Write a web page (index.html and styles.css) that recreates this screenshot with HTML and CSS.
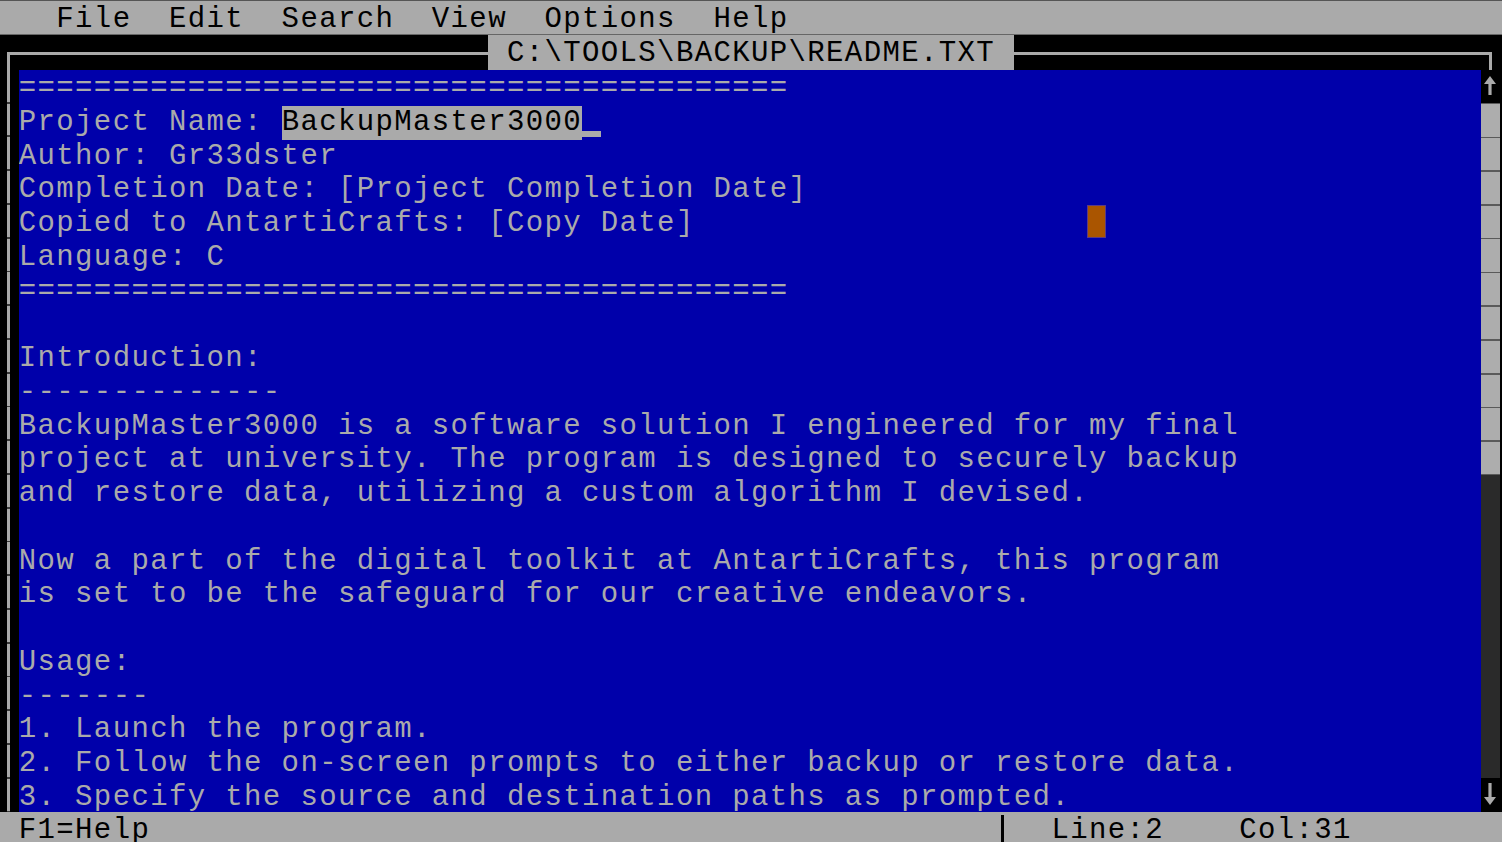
FILE: index.html
```html
<!DOCTYPE html>
<html lang="en">
<head>
<meta charset="utf-8">
<title>EDIT - README.TXT</title>
<link rel="stylesheet" href="styles.css">
</head>
<body>
<div class="screen">
  <div class="menubar"><span class="txt">   File  Edit  Search  View  Options  Help</span></div>

  <div class="titlebar">
    <div class="tseg-left"><div class="corner-l"></div></div>
    <div class="title"><span class="txt"> C:\TOOLS\BACKUP\README.TXT </span></div>
    <div class="tseg-right"><div class="corner-r"></div></div>
  </div>

  <div class="body">
    <div class="gutter"><div class="vline"></div></div>
    <div class="editor">
      <div class="line">=========================================</div>
      <div class="line">Project Name: <span class="sel">BackupMaster3000</span><span class="cur"> </span></div>
      <div class="line">Author: Gr33dster</div>
      <div class="line">Completion Date: [Project Completion Date]</div>
      <div class="line">Copied to AntartiCrafts: [Copy Date]                     <span class="mouse"> </span></div>
      <div class="line">Language: C</div>
      <div class="line">=========================================</div>
      <div class="line"> </div>
      <div class="line">Introduction:</div>
      <div class="line">--------------</div>
      <div class="line">BackupMaster3000 is a software solution I engineered for my final</div>
      <div class="line">project at university. The program is designed to securely backup</div>
      <div class="line">and restore data, utilizing a custom algorithm I devised.</div>
      <div class="line"> </div>
      <div class="line">Now a part of the digital toolkit at AntartiCrafts, this program</div>
      <div class="line">is set to be the safeguard for our creative endeavors.</div>
      <div class="line"> </div>
      <div class="line">Usage:</div>
      <div class="line">-------</div>
      <div class="line">1. Launch the program.</div>
      <div class="line">2. Follow the on-screen prompts to either backup or restore data.</div>
      <div class="line">3. Specify the source and destination paths as prompted.</div>
    </div>
    <div class="scroll">
      <div class="sb-btn">
        <svg viewBox="0 0 19 34" width="19" height="34"><path d="M9 7 L15 15 L10.6 15 L10.6 26 L7.4 26 L7.4 15 L3 15 Z" fill="#aaaaaa"/></svg>
      </div>
      <div class="sb-track"></div>
      <div class="sb-dark"></div>
      <div class="sb-btn">
        <svg viewBox="0 0 19 34" width="19" height="34"><path d="M9 27 L15 19 L10.6 19 L10.6 5 L7.4 5 L7.4 19 L3 19 Z" fill="#aaaaaa"/></svg>
      </div>
    </div>
  </div>

  <div class="status"><span class="txt">F1=Help                                             <span class="vbar"> </span>  Line:2    Col:31</span></div>
</div>
</body>
</html>
```

FILE: styles.css
```css
:root {
  --cw: 18.775px;
  --rh: 33.75px;
  --gray: #aaaaaa;
  --blue: #0000aa;
}

* { box-sizing: border-box; }

html, body {
  margin: 0;
  padding: 0;
  background: #000;
  overflow: hidden;
}

.screen {
  width: 1502px;
  height: 842px;
  display: flex;
  flex-direction: column;
  font-family: "Liberation Mono", "DejaVu Sans Mono", monospace;
  font-size: 29px;
  letter-spacing: calc(var(--cw) - 29px * 0.60009765625);
  overflow: hidden;
}

.txt { white-space: pre; }

.menubar {
  height: 35px;
  flex: 0 0 35px;
  background: var(--gray);
  color: #000;
  border-top: 1px solid #555;
  border-bottom: 1px solid #666;
  padding-top: 4px;
  line-height: 29px;
  white-space: nowrap;
}

.titlebar {
  height: 34.5px;
  flex: 0 0 34.5px;
  background: #000;
  display: flex;
}

.tseg-left {
  width: calc(var(--cw) * 26);
  flex: 0 0 auto;
  padding: 17px 0 0 7px;
}

.corner-l {
  height: 100%;
  border-top: 3px solid var(--gray);
  border-left: 3px solid var(--gray);
}

.title {
  width: calc(var(--cw) * 28);
  flex: 0 0 auto;
  background: var(--gray);
  color: #000;
  padding-top: 4px;
  line-height: 30.5px;
  white-space: nowrap;
}

.tseg-right {
  flex: 1;
  padding: 17px 10px 0 0;
}

.corner-r {
  height: 100%;
  border-top: 3px solid var(--gray);
  border-right: 3px solid var(--gray);
}

.body {
  height: calc(var(--rh) * 22);
  flex: 0 0 auto;
  display: flex;
}

.gutter {
  width: var(--cw);
  flex: 0 0 auto;
  background: #000;
  padding-left: 7px;
}

.vline {
  width: 3px;
  height: 100%;
  background: repeating-linear-gradient(to bottom, #aaaaaa 0 31.75px, #3a3a3a 31.75px 33.75px);
}

.editor {
  flex: 1;
  background: var(--blue);
  color: var(--gray);
  overflow: hidden;
  display: flex;
  flex-direction: column;
  padding-top: 2.5px;
}

.line {
  height: var(--rh);
  flex: 0 0 auto;
  line-height: var(--rh);
  white-space: pre;
}

.sel {
  display: inline-block;
  vertical-align: top;
  height: var(--rh);
  line-height: var(--rh);
  background: var(--gray);
  color: #000;
}

.cur {
  display: inline-block;
  vertical-align: top;
  height: var(--rh);
  width: var(--cw);
  background: linear-gradient(to bottom, transparent 25px, #aaaaaa 25px 31px, transparent 31px);
}

.mouse {
  display: inline-block;
  vertical-align: top;
  height: var(--rh);
  width: var(--cw);
  margin-top: -2.5px;
  margin-left: -2px;
  background: #aa5500;
  box-shadow: inset 0 0 0 1px #5b3a86;
}

.scroll {
  width: 21px;
  flex: 0 0 auto;
  background: #000;
  padding-right: 2px;
  display: flex;
  flex-direction: column;
}

.sb-btn {
  height: var(--rh);
  flex: 0 0 auto;
  background: #000;
  display: flex;
  align-items: center;
}

.sb-btn svg { display: block; }

.sb-track {
  height: calc(var(--rh) * 11);
  flex: 0 0 auto;
  background: repeating-linear-gradient(to bottom, #5a5a5a 0 1.5px, #adadad 1.5px var(--rh));
}

.sb-dark {
  flex: 1;
  background: #2a2a2a;
}

.status {
  flex: 1;
  background: var(--gray);
  color: #000;
  padding-left: var(--cw);
  padding-top: 2px;
  line-height: var(--rh);
  overflow: hidden;
  white-space: nowrap;
}

.vbar {
  display: inline-block;
  vertical-align: top;
  width: var(--cw);
  height: var(--rh);
  background: linear-gradient(to right, transparent 6px, #000 6px 9px, transparent 9px);
  background-position: 0 1px;
  background-repeat: no-repeat;
}
```
